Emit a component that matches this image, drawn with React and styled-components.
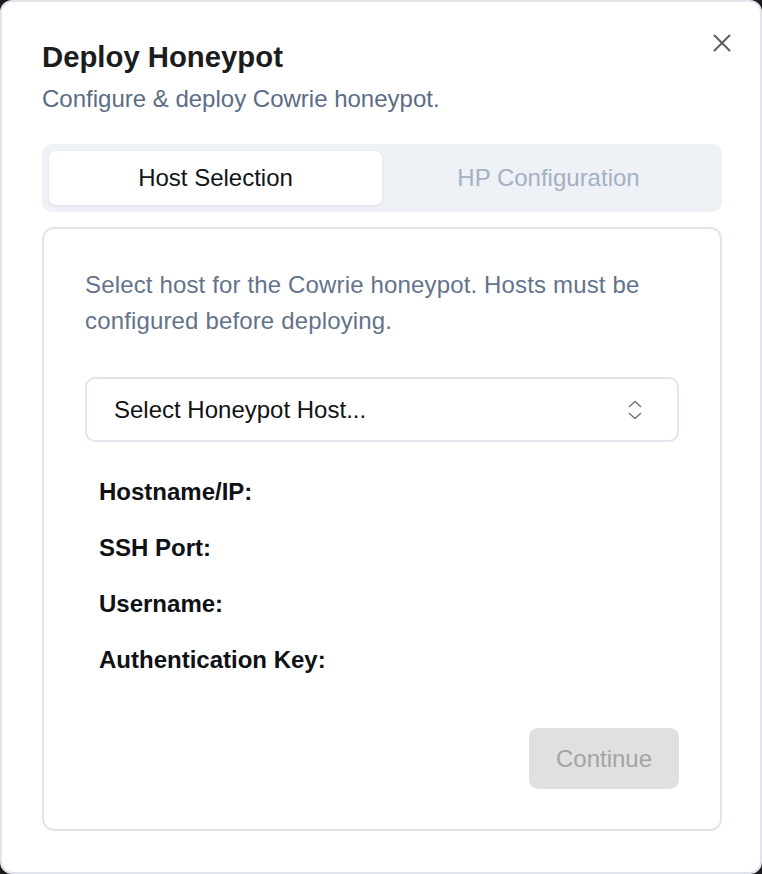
import React from "react";
import styled, { createGlobalStyle } from "styled-components";

const Global = createGlobalStyle`
  html, body { margin: 0; padding: 0; background: #1c1c1e; }
  body { font-family: "Liberation Sans", Arial, Helvetica, sans-serif; }
  * { box-sizing: border-box; }
`;

const Modal = styled.div`
  position: relative;
  width: 762px;
  height: 874px;
  background: #ffffff;
  border: 2px solid #e1e4eb;
  border-radius: 12px;
  padding: 37px 38px 0 40px;
  display: flex;
  flex-direction: column;
`;

const Title = styled.h2`
  margin: 0;
  font-size: 29.3px;
  line-height: 36px;
  font-weight: 700;
  color: #1c1c1c;
`;

const Subtitle = styled.p`
  margin: 8px 0 0;
  font-size: 24px;
  line-height: 32px;
  color: #5d6c86;
`;

const CloseButton = styled.button`
  position: absolute;
  top: 30px;
  right: 27px;
  width: 22px;
  height: 22px;
  padding: 0;
  border: 0;
  background: transparent;
  display: flex;
  align-items: center;
  justify-content: center;
  color: #5f5f5f;
  cursor: pointer;
`;

const TabBar = styled.div`
  margin-top: 29px;
  height: 68px;
  padding: 7px;
  background: #eef1f6;
  border-radius: 10px;
  display: grid;
  grid-template-columns: 1fr 1fr;
`;

const Tab = styled.div`
  display: flex;
  align-items: center;
  justify-content: center;
  border-radius: 7px;
  font-size: 24px;
  color: ${(p) => (p.$active ? "#111418" : "#a4b0c3")};
  background: ${(p) => (p.$active ? "#ffffff" : "transparent")};
  box-shadow: ${(p) => (p.$active ? "0 1px 3px rgba(15, 23, 42, 0.08)" : "none")};
`;

const Card = styled.div`
  margin-top: 15px;
  height: 604px;
  border: 2px solid #e1e4eb;
  border-radius: 12px;
  padding: 38px 41px 40px;
  display: flex;
  flex-direction: column;
`;

const Description = styled.p`
  margin: 0;
  font-size: 24px;
  line-height: 36px;
  color: #64738b;
  letter-spacing: 0.15px;
`;

const SelectBox = styled.div`
  margin-top: 38px;
  height: 65px;
  border: 2px solid #e1e5ed;
  border-radius: 10px;
  padding: 0 34px 0 27px;
  display: flex;
  align-items: center;
  justify-content: space-between;
  font-size: 24px;
  color: #121212;
`;

const Fields = styled.div`
  margin-top: 34px;
  padding-left: 14px;
  display: flex;
  flex-direction: column;
  gap: 24px;
`;

const FieldLabel = styled.div`
  font-size: 24px;
  line-height: 32px;
  font-weight: 700;
  color: #0f1115;
`;

const Footer = styled.div`
  margin-top: auto;
  display: flex;
  justify-content: flex-end;
`;

const ContinueButton = styled.button`
  width: 150px;
  height: 61px;
  border: 0;
  border-radius: 9px;
  background: #e0e0e0;
  color: #a4a4a4;
  font-family: inherit;
  font-size: 24px;
  cursor: not-allowed;
`;

const ChevronIcon = () => (
  <svg width="16" height="22" viewBox="0 0 16 22" fill="none" stroke="#707784" strokeWidth="1.6" strokeLinecap="round" strokeLinejoin="round">
    <path d="M2.5 7.5 L8 2.5 L13.5 7.5" />
    <path d="M2.5 14.5 L8 19.5 L13.5 14.5" />
  </svg>
);

const CloseIcon = () => (
  <svg width="18" height="18" viewBox="0 0 18 18" fill="none" stroke="currentColor" strokeWidth="2" strokeLinecap="round">
    <path d="M1.5 1.5 L16.5 16.5" />
    <path d="M16.5 1.5 L1.5 16.5" />
  </svg>
);

const fields = ["Hostname/IP:", "SSH Port:", "Username:", "Authentication Key:"];

export default function App() {
  return (
    <>
      <Global />
      <Modal>
        <Title>Deploy Honeypot</Title>
        <Subtitle>Configure &amp; deploy Cowrie honeypot.</Subtitle>
        <CloseButton aria-label="Close">
          <CloseIcon />
        </CloseButton>
        <TabBar>
          <Tab $active>Host Selection</Tab>
          <Tab>HP Configuration</Tab>
        </TabBar>
        <Card>
          <Description>
            Select host for the Cowrie honeypot. Hosts must be configured before deploying.
          </Description>
          <SelectBox>
            <span>Select Honeypot Host...</span>
            <ChevronIcon />
          </SelectBox>
          <Fields>
            {fields.map((f) => (
              <FieldLabel key={f}>{f}</FieldLabel>
            ))}
          </Fields>
          <Footer>
            <ContinueButton disabled>Continue</ContinueButton>
          </Footer>
        </Card>
      </Modal>
    </>
  );
}
